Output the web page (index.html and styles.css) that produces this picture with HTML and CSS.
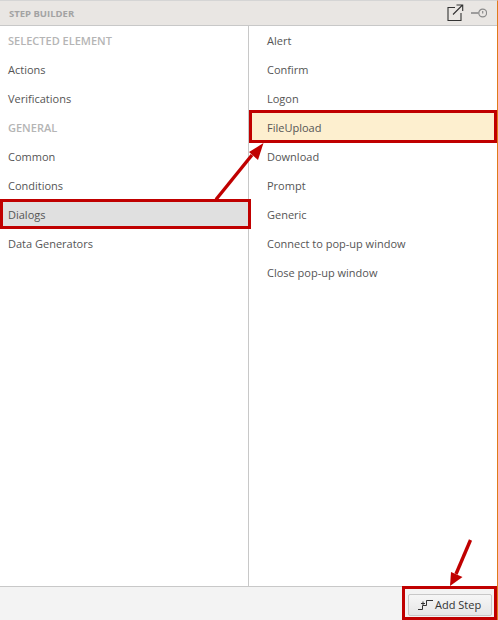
FILE: index.html
```html
<!DOCTYPE html>
<html lang="en">
<head>
<meta charset="utf-8">
<title>Step Builder</title>
<link rel="stylesheet" href="styles.css">
</head>
<body>
<div class="panel">
  <header class="head">
    <span class="head-title">STEP BUILDER</span>
    <svg class="icon-pop" width="17" height="18" viewBox="0 0 17 18" fill="none" stroke="#333" stroke-width="1.1"><path d="M8 3.5H1V16.5H14V9"/><path d="M6 10.5L15.5 1M9.5 1H15.7V7"/></svg>
    <svg class="icon-pin" width="16" height="10" viewBox="0 0 16 10" fill="none" stroke="#8a8a8a" stroke-width="1.2"><path d="M0 5H7.5" stroke-width="1.6"/><circle cx="11.7" cy="5" r="3.9"/><path d="M11.7 3V5.5"/></svg>
  </header>
  <div class="cols">
    <div class="col col-left">
      <div class="row group">SELECTED ELEMENT</div>
      <div class="row">Actions</div>
      <div class="row">Verifications</div>
      <div class="row group">GENERAL</div>
      <div class="row">Common</div>
      <div class="row">Conditions</div>
      <div class="row sel-grey">Dialogs</div>
      <div class="row">Data Generators</div>
    </div>
    <div class="col col-right">
      <div class="row">Alert</div>
      <div class="row">Confirm</div>
      <div class="row">Logon</div>
      <div class="row sel-yellow">FileUpload</div>
      <div class="row">Download</div>
      <div class="row">Prompt</div>
      <div class="row">Generic</div>
      <div class="row">Connect to pop-up window</div>
      <div class="row">Close pop-up window</div>
    </div>
  </div>
  <footer class="foot">
    <button class="add" type="button">
      <svg width="15" height="10" viewBox="0 0 15 10" fill="none" stroke="#333" stroke-width="1"><path d="M0 9.5H4.5V5.5H8.5V0.5H15"/><path d="M3 3.5H7M5 1.5V5"/></svg>
      <span>Add Step</span>
    </button>
  </footer>
</div>
<div class="mark mark-dialogs"></div>
<div class="mark mark-upload"></div>
<div class="mark mark-add"></div>
<svg class="arrows" width="498" height="620" viewBox="0 0 498 620">
  <path d="M216 199.5L252 155" stroke="#c00000" stroke-width="3.4" fill="none"/>
  <path d="M263.5 143L249 152L258 160Z" fill="#c00000"/>
  <path d="M470.5 540L456 574" stroke="#c00000" stroke-width="3.4" fill="none"/>
  <path d="M450 586L451 572L462.5 577Z" fill="#c00000"/>
</svg>
</body>
</html>
```
FILE: styles.css
```css
html, body { margin: 0; padding: 0; background: #fff; }
body { width: 498px; height: 620px; overflow: hidden; position: relative; font-family: "Open Sans", "Noto Sans", sans-serif; font-size: 11px; color: #555; }
.panel { box-sizing: border-box; width: 498px; height: 620px; display: flex; flex-direction: column; border-top: 1px solid #d5d5d5; border-right: 1px solid #e07b1a; }
.head { box-sizing: border-box; height: 25px; flex: none; display: flex; align-items: center; gap: 7px; padding: 0 10px 0 9px; background: #e9e6e3; border-bottom: 1px solid #c8c8c8; }
.head-title { flex: 1; font-size: 9.5px; font-weight: 700; color: #a3a3a3; }
.cols { flex: 1; display: flex; min-height: 0; }
.col { box-sizing: border-box; }
.col-left { width: 249px; border-right: 1px solid #c8c8c8; }
.col-right { flex: 1; }
.row { height: 29px; display: flex; align-items: center; padding-left: 8px; }
.col-right .row { padding-left: 18px; }
.group { font-weight: 600; color: #b5b5b5; }
.sel-grey { background: #e0e0e0; }
.sel-yellow { background: #fdefcf; }
.foot { box-sizing: border-box; height: 34px; flex: none; display: flex; justify-content: flex-end; align-items: center; padding: 2px 5px 0 0; background: #f3f3f3; border-top: 1px solid #c8c8c8; }
.add { box-sizing: border-box; width: 84px; height: 22px; display: flex; align-items: center; gap: 2px; padding: 0 0 0 9px; border: 1px solid #c8c8c8; border-radius: 2px; background: linear-gradient(#f6f6f6, #e6e6e6); font: 11px "Open Sans", sans-serif; color: #333; }
.mark { position: absolute; box-sizing: border-box; border: 3px solid #c00000; }
.mark-dialogs { left: 0; top: 199px; width: 251px; height: 30px; }
.mark-upload { left: 249px; top: 110px; width: 248px; height: 33px; }
.mark-add { left: 402px; top: 586px; width: 95px; height: 34px; }
.arrows { position: absolute; left: 0; top: 0; pointer-events: none; }
```
